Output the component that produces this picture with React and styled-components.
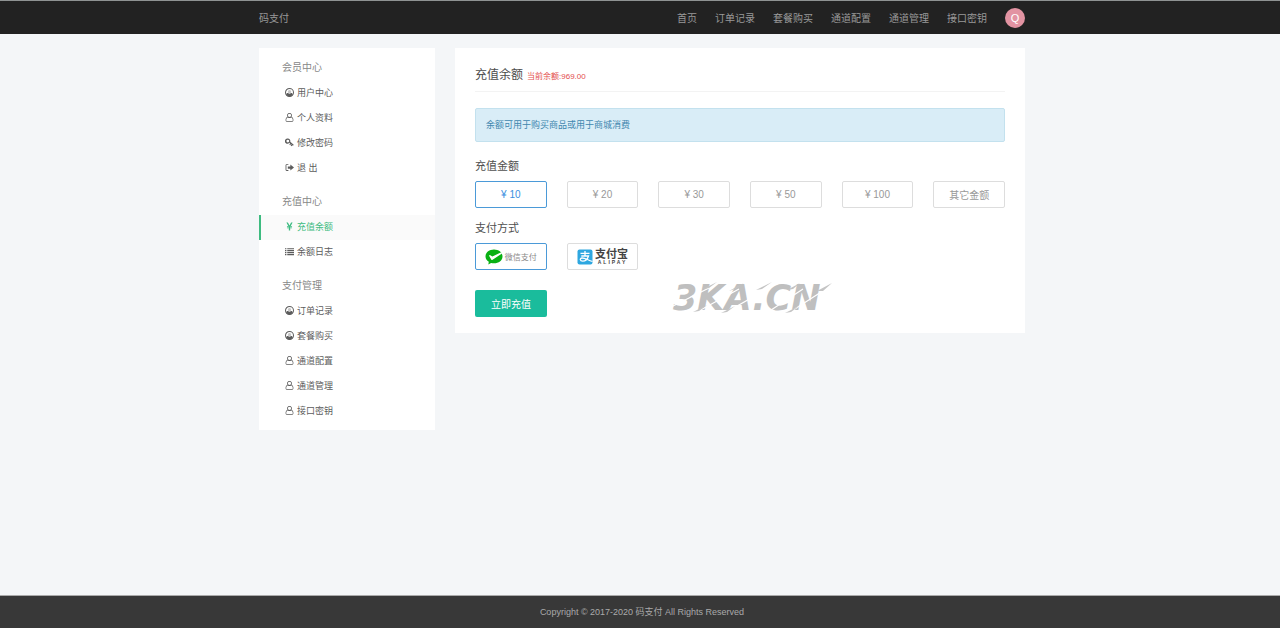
import React, { useState } from 'react';
import styled, { createGlobalStyle } from 'styled-components';

const Global = createGlobalStyle`
  * { box-sizing: border-box; }
  body {
    margin: 0;
    background: #f4f6f8;
    color: #555;
    font-family: "Liberation Sans", "Noto Sans CJK SC", sans-serif;
    font-size: 9px;
    font-weight: 400;
  }
  button, input { font: inherit; }
  h1, h2, p, ul { margin: 0; padding: 0; font-weight: inherit; }
  ul { list-style: none; }
  a { color: inherit; text-decoration: none; }
`;

const Page = styled.div`
  min-height: 100vh;
  display: flex;
  flex-direction: column;
`;

const TopBar = styled.header`
  background: #222;
  border-top: 1px solid #8f9393;
  color: #999;
  padding-left: 4px;
`;

const Container = styled.div`
  width: 100%;
  max-width: 766px;
  margin: 0 auto;
`;

const TopBarInner = styled(Container)`
  display: flex;
  align-items: center;
  justify-content: space-between;
  height: 33px;
  font-size: 10px;
`;

const Nav = styled.nav`
  display: flex;
  align-items: center;
  gap: 18px;
`;

const Avatar = styled.a`
  display: grid;
  place-items: center;
  width: 20px;
  height: 20px;
  border-radius: 50%;
  background: #e293a2;
  color: #fff;
  font-size: 11px;
`;

const Main = styled.main`
  flex: 1;
  padding: 14px 0 20px 4px;
`;

const Columns = styled(Container)`
  display: grid;
  grid-template-columns: 176px minmax(0, 1fr);
  gap: 20px;
  align-items: start;
`;

const Sidebar = styled.aside`
  background: #fff;
  padding-bottom: 6px;
`;

const Group = styled.section`
  & + & { margin-top: 1px; }
`;

const GroupTitle = styled.h2`
  height: 33px;
  padding: 6px 23px 0;
  line-height: 28px;
  font-size: 10px;
  color: #888;
`;

const MenuLink = styled.a`
  display: flex;
  align-items: center;
  gap: 3px;
  height: 25px;
  padding: 0 0 2px 24px;
  border-left: 2px solid ${(p) => (p.$active ? '#3dbb80' : 'transparent')};
  background: ${(p) => (p.$active ? '#fafafa' : 'transparent')};
  color: ${(p) => (p.$active ? '#3dbb80' : '#5c5c5c')};
  white-space: pre;
`;

const Glyph = styled.svg`
  width: 9px;
  height: 9px;
  fill: currentColor;
  flex: none;
`;

const Panel = styled.section`
  background: #fff;
  padding: 14px 20px 16px;
  position: relative;
`;

const PanelTitle = styled.h1`
  display: flex;
  align-items: baseline;
  gap: 4px;
  height: 30px;
  line-height: 26px;
  border-bottom: 1px solid #f3f3f3;
  font-size: 12px;
  color: #4c4c4c;
`;

const Balance = styled.small`
  font-size: 8px;
  color: #e34d4d;
`;

const Notice = styled.p`
  margin-top: 16px;
  height: 34px;
  padding: 0 10px;
  border: 1px solid #c3e1ee;
  border-radius: 2px;
  background: #d9edf7;
  color: #3e86ae;
  line-height: 32px;
`;

const Field = styled.fieldset`
  margin: ${(p) => p.$top} 0 0;
  padding: 0;
  border: 0;
  min-width: 0;
`;

const Legend = styled.legend`
  padding: 0;
  height: 24px;
  line-height: 18px;
  font-size: 11px;
  color: #505050;
`;

const Options = styled.div`
  display: grid;
  grid-template-columns: repeat(6, minmax(0, 1fr));
  gap: 20px;
`;

const Option = styled.label`
  position: relative;
  display: flex;
  align-items: center;
  justify-content: center;
  gap: 2px;
  height: 27px;
  border: 1px solid ${(p) => (p.$on ? '#4b9ad8' : '#ddd')};
  border-radius: 2px;
  color: ${(p) => (p.$on ? '#3b8fe0' : '#999')};
  font-size: 10px;
  cursor: pointer;
`;

const HiddenRadio = styled.input`
  position: absolute;
  inset: 0;
  margin: 0;
  opacity: 0;
`;

const WechatLabel = styled.span`
  font-size: 8px;
  color: #888;
`;

const AlipayLabel = styled.span`
  display: flex;
  flex-direction: column;
  align-items: center;
  font-size: 11px;
  line-height: 12px;
  font-weight: 700;
  color: #444;
`;

const AlipayLatin = styled.span`
  font-size: 5px;
  line-height: 5px;
  letter-spacing: 2px;
  padding-left: 2px;
`;

const Logo = styled.svg`
  width: ${(p) => p.$w}px;
  height: 16px;
  flex: none;
`;

const Submit = styled.button`
  display: block;
  width: 72px;
  height: 27px;
  margin-top: 20px;
  padding: 0;
  border: 0;
  border-radius: 2px;
  background: #1abc9c;
  color: #fff;
  font-size: 10px;
`;

const Watermark = styled.svg`
  position: absolute;
  right: 190px;
  bottom: 14px;
  width: 166px;
  height: 40px;
  pointer-events: none;
`;

const Footer = styled.footer`
  height: 33px;
  padding-left: 4px;
  background: #383838;
  border-top: 1px solid #aaa;
  color: #aaa;
  text-align: center;
  line-height: 32px;
`;

const icons = {
  circle: (
    <>
      <circle cx="8" cy="8" r="7.100" fill="none" stroke="currentColor" strokeWidth="1.800" />
      <path d="M2 11.500c.8-1.600 1.900-2.300 3.300-2.400a4 4 0 0 0 5.400 0c1.400.1 2.500.8 3.300 2.400A7 7 0 0 1 8 15.300a7 7 0 0 1-6-3.800Z" />
      <circle cx="8" cy="6.500" r="3" opacity="0.350" />
    </>
  ),
  user: (
    <path fillRule="evenodd" d="M8 0a4.200 4.200 0 0 1 3.500 6.600C13.800 7.200 15 9.500 15 12.500c0 2.100-1.200 3.500-3 3.500H4c-1.800 0-3-1.400-3-3.500 0-3 1.200-5.300 3.500-5.900A4.200 4.200 0 0 1 8 0Zm0 1.200a3 3 0 1 0 0 6 3 3 0 0 0 0-6ZM5 7.800c-1.900.4-2.800 2.300-2.800 4.700 0 1.400.7 2.300 1.800 2.300h8c1.100 0 1.800-.9 1.800-2.300 0-2.400-.9-4.300-2.800-4.700a4.800 4.800 0 0 1-6 0Z" />
  ),
  key: (
    <path fillRule="evenodd" d="M5 1a4.500 4.500 0 0 1 4.300 5.800l6.200 5.400-1.200 1.400-1-.8-1.500 2-1.700-1.400 1.500-1.900-.8-.7-1.700 1.900-1.500-1.400 1.600-1.900-1.300-1A4.600 4.600 0 1 1 5 1Zm0 2a2.500 2.500 0 1 0 0 5 2.500 2.500 0 0 0 0-5Z" />
  ),
  exit: (
    <path d="M6 2v1.500H2.500v9H6V14H3c-1.200 0-2-.8-2-2V4c0-1.200.8-2 2-2h3Zm3.500.5L16 8l-6.500 5.500V10H5V6h4.500V2.500Z" />
  ),
  yen: (
    <path d="M2.500 1H5.200L8 6l2.800-5h2.700L10.200 7H12.500v1.400H9.200v1.300h3.300V11H9.200v4H6.800v-4H3.500V9.700h3.300V8.400H3.500V7h2.300Z" />
  ),
  list: (
    <path d="M0 2h2.500v2H0Zm4 0h12v2H4ZM0 5.500h2.500v2H0Zm4 0h12v2H4ZM0 9h2.500v2H0Zm4 0h12v2H4Zm-4 3.500h2.500v2H0Zm4 0h12v2H4Z" />
  ),
};

const navItems = ['首页', '订单记录', '套餐购买', '通道配置', '通道管理', '接口密钥'];

const groups = [
  { title: '会员中心', items: [['circle', '用户中心'], ['user', '个人资料'], ['key', '修改密码'], ['exit', '退 出']] },
  { title: '充值中心', items: [['yen', '充值余额'], ['list', '余额日志']] },
  {
    title: '支付管理',
    items: [['circle', '订单记录'], ['circle', '套餐购买'], ['user', '通道配置'], ['user', '通道管理'], ['user', '接口密钥']],
  },
];

const amounts = ['¥ 10', '¥ 20', '¥ 30', '¥ 50', '¥ 100', '其它金额'];

function WechatLogo() {
  return (
    <Logo $w={18} viewBox="0 0 18 16" aria-hidden="true">
      <path fill="#09b013" d="M9 .5c4.700 0 8.500 3 8.500 6.900S13.700 14.300 9 14.300c-1 0-2-.1-2.900-.4L3.300 15.500l.5-2.700C1.800 11.500.5 9.600.5 7.400.5 3.500 4.300.5 9 .5Z" />
      <path fill="#fff" d="M4.300 6.200c.5-.4 1-.1 1.500.3l1.500 1 9-4.200.7 1.200-9.400 6.300c-.6.400-1.100.2-1.400-.4L4.200 6.900Z" />
    </Logo>
  );
}

function AlipayLogo() {
  return (
    <Logo $w={16} viewBox="0 0 16 16" aria-hidden="true">
      <rect x="0.500" y="0.500" width="15" height="15" rx="2" fill="#2ea7e0" />
      <path fill="none" stroke="#fff" strokeWidth="1.300" d="M3.500 4.300h9M8 2v4.800M4.300 7h7.200c-.8 2.600-3 5.200-5.800 5.200-2.900 0-3.200-3-.7-3.200 2.900-.2 5.500 2 10.500 3.500" />
    </Logo>
  );
}

export default function App() {
  const [amount, setAmount] = useState(amounts[0]);
  const [method, setMethod] = useState('wechat');

  return (
    <Page>
      <Global />
      <TopBar>
        <TopBarInner>
          <a href="#home">码支付</a>
          <Nav>
            {navItems.map((t) => <a href="#nav" key={t}>{t}</a>)}
            <Avatar href="#me">Q</Avatar>
          </Nav>
        </TopBarInner>
      </TopBar>
      <Main>
        <Columns>
          <Sidebar>
            {groups.map((g) => (
              <Group key={g.title}>
                <GroupTitle>{g.title}</GroupTitle>
                <ul>
                  {g.items.map(([icon, text]) => (
                    <li key={text}>
                      <MenuLink href="#menu" $active={icon === 'yen'}>
                        <Glyph viewBox="0 0 16 16" aria-hidden="true">{icons[icon]}</Glyph>
                        {text}
                      </MenuLink>
                    </li>
                  ))}
                </ul>
              </Group>
            ))}
          </Sidebar>
          <Panel>
            <PanelTitle>充值余额<Balance>当前余额:969.00</Balance></PanelTitle>
            <Notice>余额可用于购买商品或用于商城消费</Notice>
            <Field $top="15px">
              <Legend>充值金额</Legend>
              <Options>
                {amounts.map((a) => (
                  <Option key={a} $on={a === amount}>
                    <HiddenRadio type="radio" name="amount" checked={a === amount} onChange={() => setAmount(a)} />
                    {a}
                  </Option>
                ))}
              </Options>
            </Field>
            <Field $top="11px">
              <Legend>支付方式</Legend>
              <Options>
                <Option $on={method === 'wechat'}>
                  <HiddenRadio type="radio" name="method" checked={method === 'wechat'} onChange={() => setMethod('wechat')} />
                  <WechatLogo />
                  <WechatLabel>微信支付</WechatLabel>
                </Option>
                <Option $on={method === 'alipay'}>
                  <HiddenRadio type="radio" name="method" checked={method === 'alipay'} onChange={() => setMethod('alipay')} />
                  <AlipayLogo />
                  <AlipayLabel>支付宝<AlipayLatin>ALIPAY</AlipayLatin></AlipayLabel>
                </Option>
              </Options>
            </Field>
            <Submit type="button">立即充值</Submit>
            <Watermark viewBox="0 0 166 40">
              <text x="4" y="31" fontFamily="DejaVu Sans" fontSize="35" fontWeight="700" fontStyle="italic" fill="#bfbfbf">3KA.CN</text>
              <path stroke="#fff" strokeWidth="1.200" d="M2 28 40 9M26 34 70 10M54 35 98 10M96 35 134 10M118 35 160 8" />
              <path fill="#c4c4c4" d="M34 10 48 3 40 9ZM60 12 75 4 66 10ZM87 11 103 3 93 10ZM118 11 131 4 124 10ZM148 12 163 4 154 12ZM24 33 38 26 30 32ZM52 34 66 27 58 33ZM116 34 130 27 122 33Z" />
            </Watermark>
          </Panel>
        </Columns>
      </Main>
      <Footer>Copyright © 2017-2020 码支付 All Rights Reserved</Footer>
    </Page>
  );
}
